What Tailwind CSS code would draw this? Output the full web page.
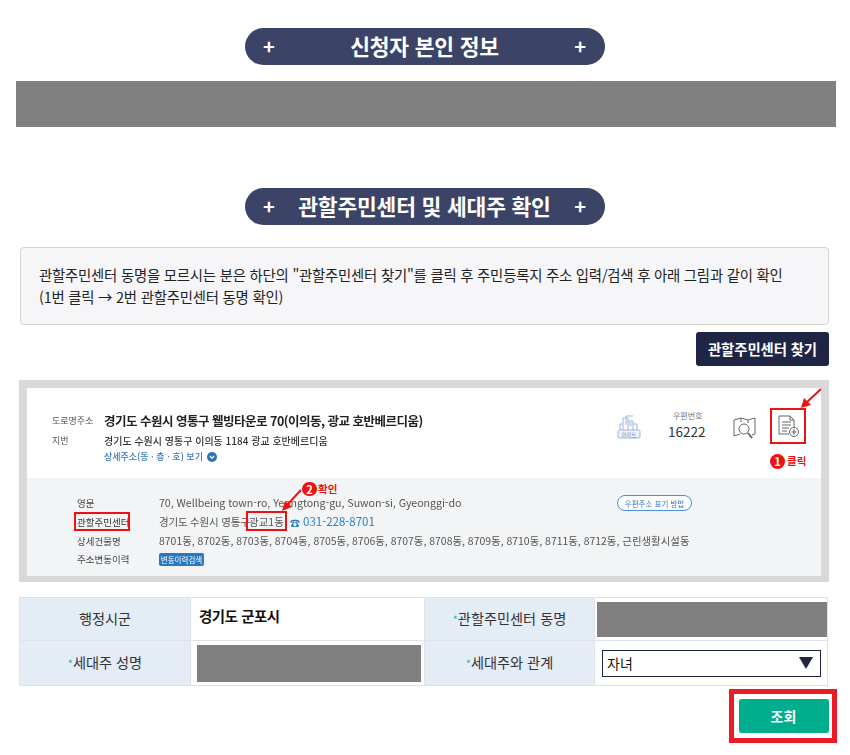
<!DOCTYPE html>
<html lang="ko">
<head>
<meta charset="utf-8">
<script src="https://cdn.jsdelivr.net/npm/@tailwindcss/browser@4"></script>
</head>
<body class="bg-white">
<main class="relative w-[850px] h-[755px] overflow-hidden font-['Noto_Sans_CJK_KR','Noto_Sans',sans-serif] text-[#222]">
  <div class="pt-[28px]">
    <div class="mx-auto w-[360px] h-[37px] rounded-full bg-[#3b4466] flex items-center justify-between pl-[18px] pr-[19px] pb-[2px] text-white font-bold">
      <span class="text-[20px] leading-none">+</span>
      <span class="text-[21.5px] leading-none tracking-[-0.2px]">신청자 본인 정보</span>
      <span class="text-[20px] leading-none">+</span>
    </div>
  </div>
  <div class="mt-[16px] ml-[16px] w-[820px] h-[46px] bg-[#808080]"></div>

  <div class="mt-[61px] mx-auto w-[360px] h-[37px] rounded-full bg-[#3b4466] flex items-center justify-between pl-[18px] pr-[19px] pb-[1px] text-white font-bold">
    <span class="text-[20px] leading-none">+</span>
    <span class="text-[21.5px] leading-none tracking-[-0.2px]">관할주민센터 및 세대주 확인</span>
    <span class="text-[20px] leading-none">+</span>
  </div>

  <div class="mt-[22px] ml-[20px] w-[809px] h-[78px] rounded-[4px] border border-[#d4d4d4] bg-[#f6f6f8] pl-[18px] pt-[16px] text-[14.4px] leading-[22px] tracking-[-0.22px]">
    <p>관할주민센터 동명을 모르시는 분은 하단의 "관할주민센터 찾기"를 클릭 후 주민등록지 주소 입력/검색 후 아래 그림과 같이 확인</p>
    <p>(1번 클릭 → 2번 관할주민센터 동명 확인)</p>
  </div>

  <div class="mt-[7px] ml-[696px] w-[133px] h-[34px] rounded-[3px] bg-[#1e2545] text-white font-bold text-[14.4px] flex items-center justify-center tracking-[-0.1px]">관할주민센터 찾기</div>

  <!-- guide picture -->
  <div class="relative mt-[14px] ml-[19px] w-[810px] h-[202px] border-[8px] border-[#d9d9d9] bg-white">
    <div class="h-[90px] pl-[25px] pt-[23px] flex blur-[0.25px]">
      <div class="w-[52px] text-[9px] text-[#555] leading-[20px]">
        <div class="h-[20px]">도로명주소</div>
        <div class="h-[20px]">지번</div>
      </div>
      <div>
        <div class="h-[20px] text-[12.5px] font-semibold leading-[20px] tracking-[-0.5px] text-[#222]">경기도 수원시 영통구 웰빙타운로 70(이의동, 광교 호반베르디움)</div>
        <div class="h-[20px] text-[10px] font-medium leading-[20px] text-[#333]">경기도 수원시 영통구 이의동 1184 광교 호반베르디움</div>
        <div class="flex items-center gap-[4px] h-[12px] text-[9px] font-medium text-[#3a78c0]">
          상세주소(동 · 층 · 호) 보기
          <svg width="10" height="10" viewBox="0 0 10 10"><circle cx="5" cy="5" r="5" fill="#2f6fc0"/><path d="M2.8 4l2.2 2.2L7.2 4" fill="none" stroke="#fff" stroke-width="1.3"/></svg>
        </div>
      </div>
    </div>
    <div class="h-[98px] bg-[#f3f4f6] pl-[50px] pt-[16px] text-[9.5px] blur-[0.25px]">
      <div class="flex h-[18.7px] items-center">
        <div class="w-[82px] text-[#444]">영문</div>
        <div class="text-[10.65px] leading-[12px] text-[#555] tracking-[-0.05px] w-[458px] whitespace-nowrap">70, Wellbeing town-ro, Yeongtong-gu, Suwon-si, Gyeonggi-do</div>
        <div class="w-[75px] h-[16px] rounded-full border border-[#4a90d8] bg-white text-[7.5px] text-[#3a78c0] flex items-center justify-center whitespace-nowrap">우편주소 표기 방법</div>
      </div>
      <div class="flex h-[18.7px] items-center">
        <div class="w-[82px] text-[#333]">관할주민센터</div>
        <div class="text-[10.5px] text-[#555] tracking-[-0.2px] w-[87px] whitespace-nowrap">경기도 수원시 영통구</div>
        <div class="text-[10.5px] text-[#555] w-[44px] pl-[3px] whitespace-nowrap">광교1동</div>
        <div class="text-[10px] text-[#2a78c0] w-[13px]">☎</div>
        <div class="text-[11.5px] text-[#2f80c8] whitespace-nowrap">031-228-8701</div>
      </div>
      <div class="flex h-[18.7px] items-center">
        <div class="w-[82px] text-[#444]">상세건물명</div>
        <div class="text-[10.45px] text-[#555] whitespace-nowrap">8701동, 8702동, 8703동, 8704동, 8705동, 8706동, 8707동, 8708동, 8709동, 8710동, 8711동, 8712동, 근린생활시설동</div>
      </div>
      <div class="flex h-[18.7px] items-center">
        <div class="w-[82px] text-[#444]">주소변동이력</div>
        <div class="w-[45px] h-[13px] rounded-[2px] bg-[#2a78c0] text-white text-[7.5px] flex items-center justify-center whitespace-nowrap">변동이력검색</div>
      </div>
    </div>

    <!-- annotations and icons placed on the picture -->
    <svg class="absolute left-[590px] top-[25px]" width="25" height="26" viewBox="0 0 25 26" fill="none" stroke="#9db4dc" stroke-width="1"><path d="M6 17V5h5v12M11 8h5v9M16 3H9v2M3 17v-6h3M16 11h4v6"/><path d="M8 7h2M8 9h2M8 11h2M12 10h3M12 12h3"/><rect x="1" y="17" width="22" height="8" rx="1.5" fill="#eef3fb"/><text x="12" y="23.5" font-size="5.5" fill="#6f90c8" stroke="none" text-anchor="middle">아파트</text></svg>
    <div class="absolute left-[646px] top-[22px] text-[8px] text-[#777] whitespace-nowrap">우편번호</div>
    <div class="absolute left-[641px] top-[34px] text-[13.5px] text-[#333] leading-[18px]">16222</div>
    <svg class="absolute left-[706px] top-[28px]" width="24" height="24" viewBox="0 0 24 24" fill="none" stroke="#666" stroke-width="1"><path d="M1 4l7-2 7 2 7-2v16l-3 1M8 2v4M15 4v3M1 4v16l6-2"/><circle cx="11" cy="13" r="5"/><path d="M15 17l4 5"  stroke-width="2"/></svg>
    <div class="absolute left-[743px] top-[20px] w-[36px] h-[36px] border-2 border-[#ee1111] flex items-center justify-center">
      <svg width="24" height="24" viewBox="0 0 24 24" fill="none" stroke="#666" stroke-width="1"><path d="M13 20H3V2h11l4 4v7"/><path d="M14 2v4h4M6 8h9M6 11h9M6 14h7M6 17h5"/><circle cx="18" cy="18" r="4.5" fill="#fff"/><path d="M15.5 18h5M18 15.5v5" stroke-width="1.2"/></svg>
    </div>
    <svg class="absolute left-[772px] top-[-2px]" width="30" height="24" viewBox="0 0 30 24"><path d="M22 3L7 17" stroke="#ee1111" stroke-width="2"/><path d="M2 22l3-10 7 7z" fill="#ee1111"/></svg>
    <div class="absolute left-[743px] top-[66px] flex items-center gap-[2px] text-[10.5px] font-bold text-[#ee1111] leading-none whitespace-nowrap">
      <span class="w-[15px] h-[15px] rounded-full bg-[#ee1111] text-white text-[11px] flex items-center justify-center">1</span><span>클릭</span>
    </div>
    <div class="absolute left-[275px] top-[94px] flex items-center gap-[1px] text-[10.5px] font-bold text-[#ee1111] leading-none whitespace-nowrap">
      <span class="w-[15px] h-[14px] rounded-full bg-[#ee1111] text-white text-[11px] flex items-center justify-center">2</span><span>확인</span>
    </div>
    <svg class="absolute left-[252px] top-[99px]" width="30" height="26" viewBox="0 0 30 26"><path d="M22 3L8 18" stroke="#ee1111" stroke-width="2"/><path d="M3 24l3-10 7 6z" fill="#ee1111"/></svg>
    <div class="absolute left-[47px] top-[124px] w-[56px] h-[19px] border-2 border-[#ee1111]"></div>
    <div class="absolute left-[219px] top-[123px] w-[41px] h-[20px] border-2 border-[#ee1111]"></div>
  </div>

  <!-- form table -->
  <div class="mt-[15px] ml-[19px] w-[809px] h-[89px] grid grid-cols-[170px_233px_169px_232px] grid-rows-[42px_44px] gap-px bg-[#dfe3e9] border border-[#dfe3e9] text-[14.2px]">
    <div class="bg-[#e4ecf6] flex items-center justify-center text-[#333]">행정시군</div>
    <div class="bg-white pl-[8px] pt-[7px] font-bold text-[14.4px] tracking-[-0.4px] text-[#111]">경기도 군포시</div>
    <div class="bg-[#e4ecf6] flex items-center justify-center text-[#333]"><span class="text-[#2bb5a0] text-[11px]">*</span>관할주민센터 동명</div>
    <div class="bg-white flex items-center pl-[2px]"><div class="w-[230px] h-[35px] bg-[#808080]"></div></div>
    <div class="bg-[#e4ecf6] flex items-center justify-center text-[#333]"><span class="text-[#2bb5a0] text-[11px]">*</span>세대주 성명</div>
    <div class="bg-white flex items-center pl-[6px]"><div class="w-[224px] h-[37px] bg-[#808080]"></div></div>
    <div class="bg-[#e4ecf6] flex items-center justify-center text-[#333]"><span class="text-[#2bb5a0] text-[11px]">*</span>세대주와 관계</div>
    <div class="bg-white flex items-center pl-[7px]">
      <div class="w-[219px] h-[27px] border border-[#1e2545] flex items-center justify-between pl-[4px] pr-[7px] text-[14px] text-[#111]">
        자녀
        <svg width="14" height="12" viewBox="0 0 14 12"><path d="M0 0h14L7 12z" fill="#1e2545"/></svg>
      </div>
    </div>
  </div>

  <div class="absolute left-[729px] top-[689px] w-[108px] h-[54px] border-[5px] border-[#ed1c24] flex items-center justify-center pl-[1px]">
    <div class="w-[90px] h-[34px] rounded-[3px] bg-[#00ae8e] text-white font-bold text-[14px] flex items-center justify-center">조회</div>
  </div>
</main>
</body>
</html>
